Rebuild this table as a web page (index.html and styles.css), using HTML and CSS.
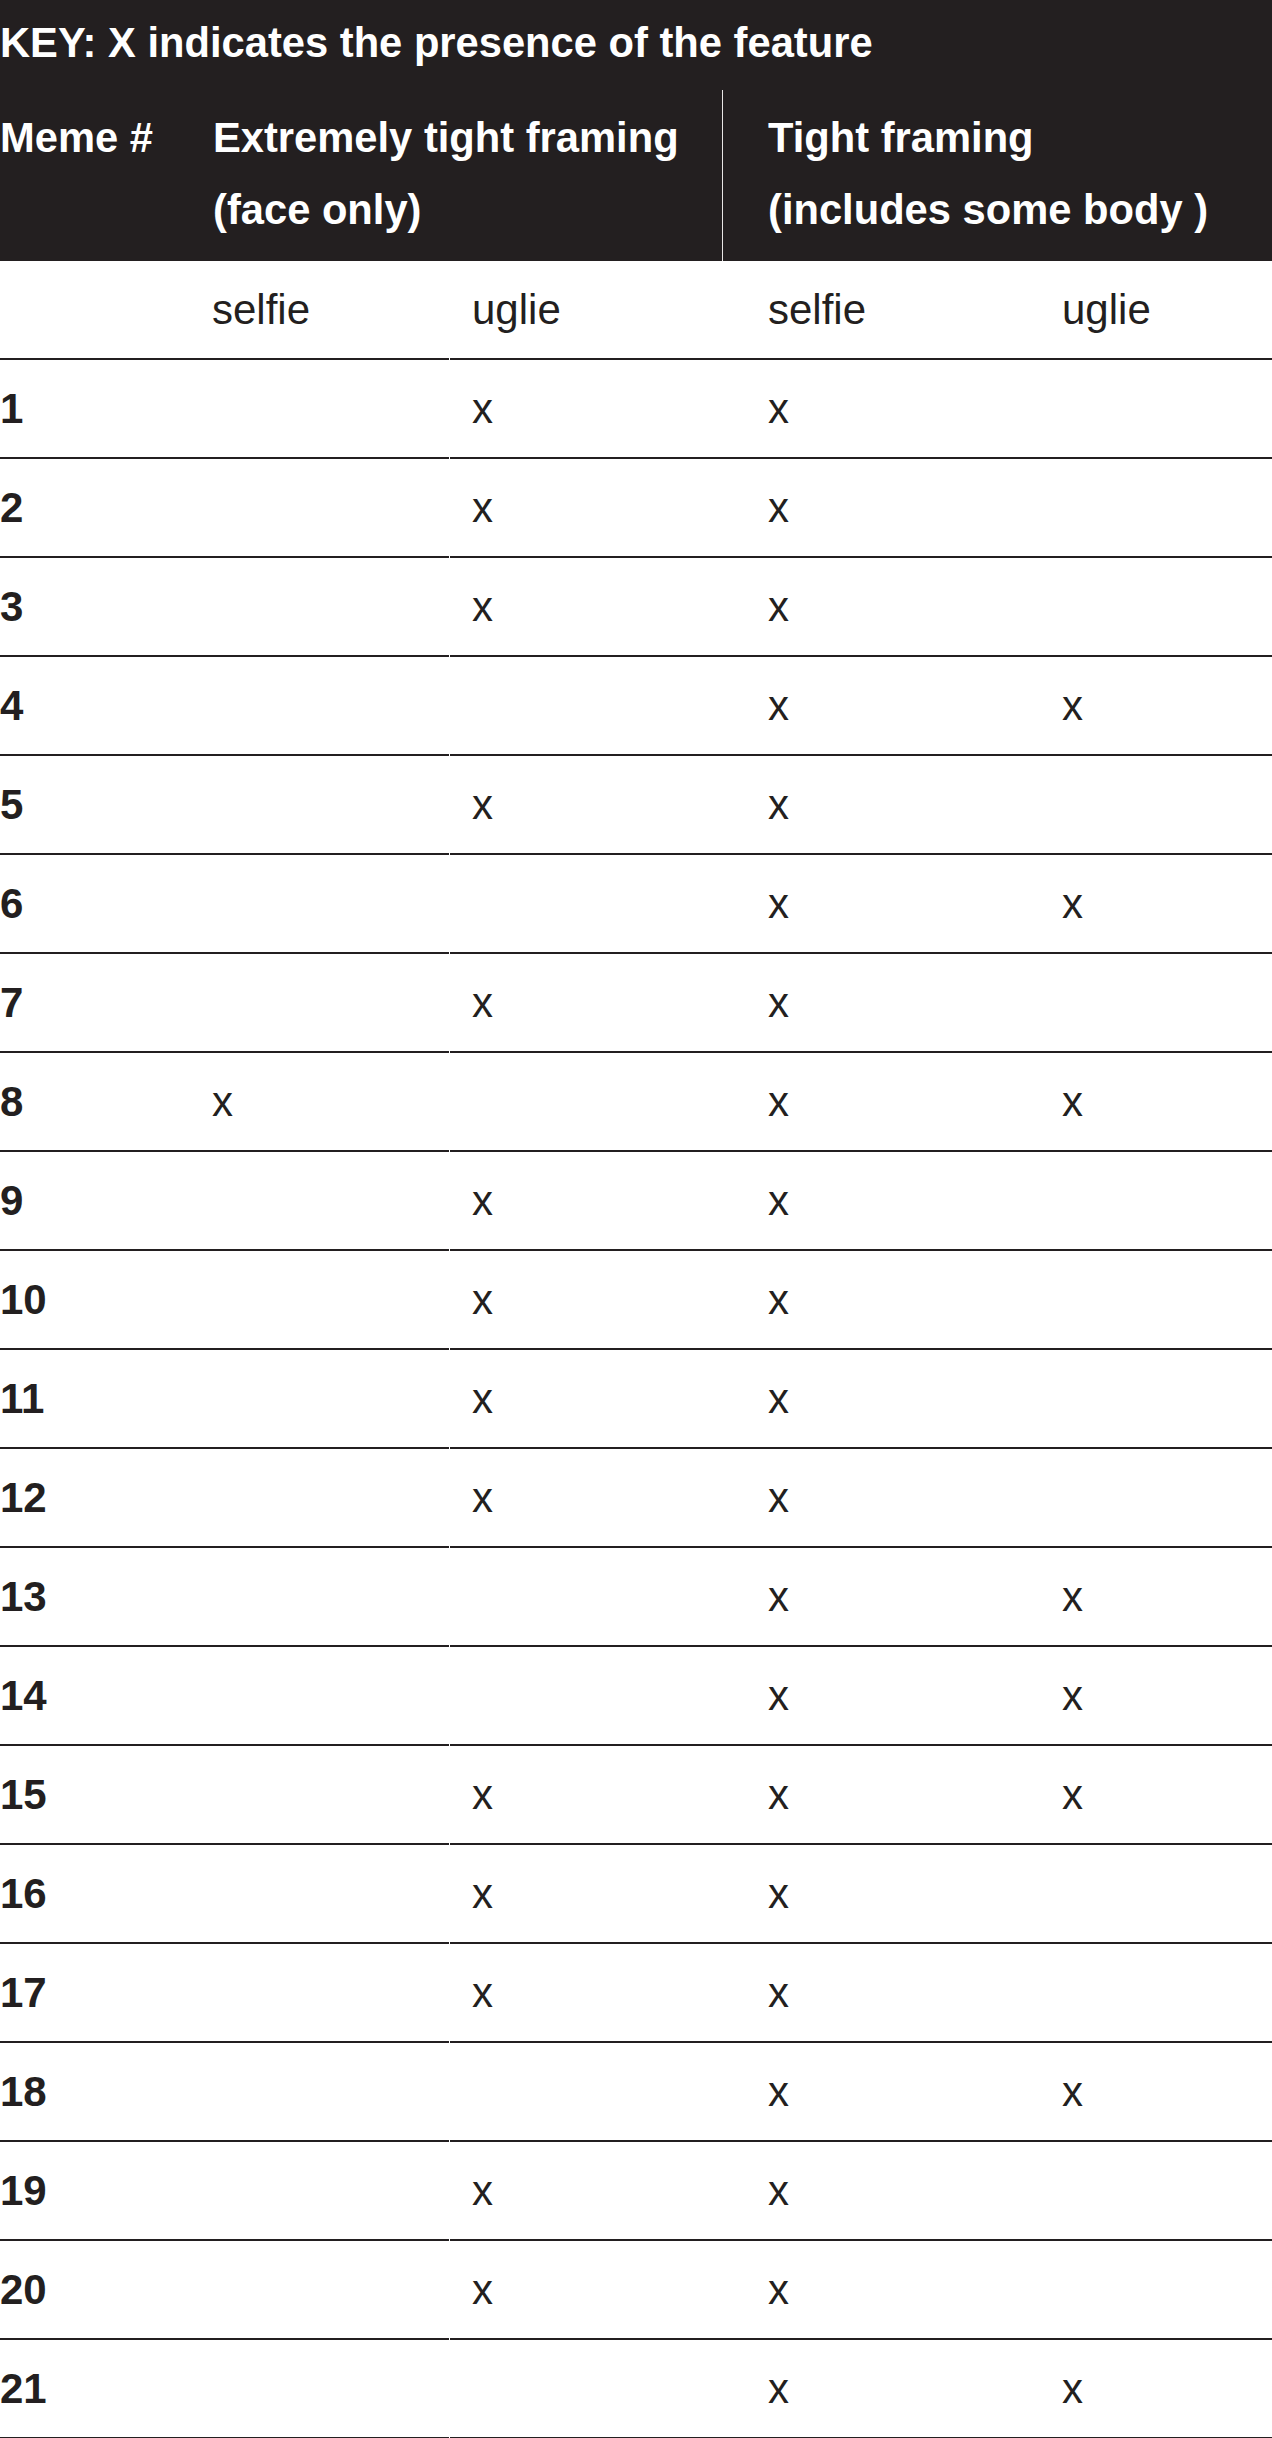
FILE: index.html
```html
<!DOCTYPE html>
<html lang="en">
<head>
<meta charset="utf-8">
<title>Meme framing key</title>
<link rel="stylesheet" href="styles.css">
</head>
<body>
<div class="sheet">
  <div class="head">
    <div class="key">KEY: X indicates the presence of the feature</div>
    <div class="head-row">
      <div class="h-meme">Meme #</div>
      <div class="h-group">Extremely tight framing<br>(face only)</div>
      <div class="h-group h-group-right">Tight framing<br>(includes some body )</div>
    </div>
  </div>
  <div class="row sub">
    <div class="c c1"></div><div class="c c2">selfie</div><div class="c c3">uglie</div><div class="c c4">selfie</div><div class="c c5">uglie</div>
  </div>
  <div class="row"><div class="c c1">1</div><div class="c c2"></div><div class="c c3">x</div><div class="c c4">x</div><div class="c c5"></div></div>
  <div class="row"><div class="c c1">2</div><div class="c c2"></div><div class="c c3">x</div><div class="c c4">x</div><div class="c c5"></div></div>
  <div class="row"><div class="c c1">3</div><div class="c c2"></div><div class="c c3">x</div><div class="c c4">x</div><div class="c c5"></div></div>
  <div class="row"><div class="c c1">4</div><div class="c c2"></div><div class="c c3"></div><div class="c c4">x</div><div class="c c5">x</div></div>
  <div class="row"><div class="c c1">5</div><div class="c c2"></div><div class="c c3">x</div><div class="c c4">x</div><div class="c c5"></div></div>
  <div class="row"><div class="c c1">6</div><div class="c c2"></div><div class="c c3"></div><div class="c c4">x</div><div class="c c5">x</div></div>
  <div class="row"><div class="c c1">7</div><div class="c c2"></div><div class="c c3">x</div><div class="c c4">x</div><div class="c c5"></div></div>
  <div class="row"><div class="c c1">8</div><div class="c c2">x</div><div class="c c3"></div><div class="c c4">x</div><div class="c c5">x</div></div>
  <div class="row"><div class="c c1">9</div><div class="c c2"></div><div class="c c3">x</div><div class="c c4">x</div><div class="c c5"></div></div>
  <div class="row"><div class="c c1">10</div><div class="c c2"></div><div class="c c3">x</div><div class="c c4">x</div><div class="c c5"></div></div>
  <div class="row"><div class="c c1">11</div><div class="c c2"></div><div class="c c3">x</div><div class="c c4">x</div><div class="c c5"></div></div>
  <div class="row"><div class="c c1">12</div><div class="c c2"></div><div class="c c3">x</div><div class="c c4">x</div><div class="c c5"></div></div>
  <div class="row"><div class="c c1">13</div><div class="c c2"></div><div class="c c3"></div><div class="c c4">x</div><div class="c c5">x</div></div>
  <div class="row"><div class="c c1">14</div><div class="c c2"></div><div class="c c3"></div><div class="c c4">x</div><div class="c c5">x</div></div>
  <div class="row"><div class="c c1">15</div><div class="c c2"></div><div class="c c3">x</div><div class="c c4">x</div><div class="c c5">x</div></div>
  <div class="row"><div class="c c1">16</div><div class="c c2"></div><div class="c c3">x</div><div class="c c4">x</div><div class="c c5"></div></div>
  <div class="row"><div class="c c1">17</div><div class="c c2"></div><div class="c c3">x</div><div class="c c4">x</div><div class="c c5"></div></div>
  <div class="row"><div class="c c1">18</div><div class="c c2"></div><div class="c c3"></div><div class="c c4">x</div><div class="c c5">x</div></div>
  <div class="row"><div class="c c1">19</div><div class="c c2"></div><div class="c c3">x</div><div class="c c4">x</div><div class="c c5"></div></div>
  <div class="row"><div class="c c1">20</div><div class="c c2"></div><div class="c c3">x</div><div class="c c4">x</div><div class="c c5"></div></div>
  <div class="row"><div class="c c1">21</div><div class="c c2"></div><div class="c c3"></div><div class="c c4">x</div><div class="c c5">x</div></div>
</div>
</body>
</html>
```
FILE: styles.css
```css
html, body {
  margin: 0;
  padding: 0;
  background: #ffffff;
}

body {
  font-family: "Liberation Sans", Arial, Helvetica, sans-serif;
  font-size: 42px;
  color: #231f20;
}

.sheet {
  width: 1272px;
}

.head {
  background: #231f20;
  color: #ffffff;
  font-weight: bold;
  font-size: 41.7px;
  line-height: 72px;
  height: 261px;
}

.key {
  padding: 7px 0 11px 0;
  height: 72px;
}

.head-row {
  display: grid;
  grid-template-columns: 190px 532px 550px;
  height: 171px;
}

.h-meme {
  padding: 12px 0 0 0;
}

.h-group {
  padding: 12px 0 0 23px;
}

.h-group-right {
  border-left: 1px solid #e8e6e6;
  padding-left: 45px;
}

.row {
  display: grid;
  grid-template-columns: 190px 260px 296px 294px 232px;
  height: 99px;
}

.c {
  display: flex;
  align-items: center;
  border-bottom: 2px solid #231f20;
  white-space: nowrap;
}

.c1 {
  font-weight: bold;
  padding-left: 0;
}

.c2 {
  padding-left: 22px;
  margin-right: 1px;
}

.c3,
.c4,
.c5 {
  padding-left: 22px;
}

.sub {
  height: 99px;
}
```
